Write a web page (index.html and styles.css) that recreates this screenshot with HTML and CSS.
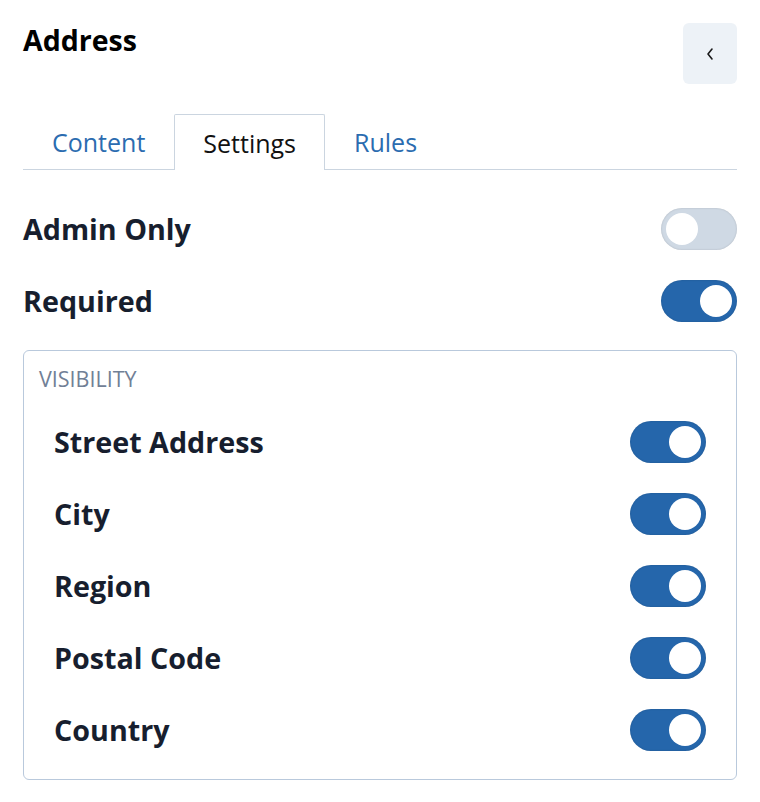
FILE: index.html
```html
<!DOCTYPE html>
<html>
<head>
<meta charset="utf-8">
<link rel="stylesheet" href="styles.css">
</head>
<body>
<div class="panel">
  <div class="header">
    <h1 class="title">Address</h1>
    <button class="back-btn" aria-label="Back">
      <svg width="10" height="14" viewBox="0 0 10 14"><path d="M7 2 L3 7 L7 12" fill="none" stroke="#1a1a1a" stroke-width="1.6" stroke-linecap="round" stroke-linejoin="round"/></svg>
    </button>
  </div>
  <div class="tabs">
    <div class="tab">Content</div>
    <div class="tab active">Settings</div>
    <div class="tab">Rules</div>
  </div>
  <div class="settings">
    <div class="row">
      <span class="label">Admin Only</span>
      <span class="toggle off"><span class="knob"></span></span>
    </div>
    <div class="row">
      <span class="label">Required</span>
      <span class="toggle on"><span class="knob"></span></span>
    </div>
  </div>
  <div class="visibility">
    <div class="legend">VISIBILITY</div>
    <div class="vis-list">
      <div class="row"><span class="label">Street Address</span><span class="toggle on"><span class="knob"></span></span></div>
      <div class="row"><span class="label">City</span><span class="toggle on"><span class="knob"></span></span></div>
      <div class="row"><span class="label">Region</span><span class="toggle on"><span class="knob"></span></span></div>
      <div class="row"><span class="label">Postal Code</span><span class="toggle on"><span class="knob"></span></span></div>
      <div class="row"><span class="label">Country</span><span class="toggle on"><span class="knob"></span></span></div>
    </div>
  </div>
</div>
</body>
</html>
```
FILE: styles.css
```css
* { box-sizing: border-box; }
body {
  margin: 0;
  background: #ffffff;
  font-family: "Open Sans", "Noto Sans", sans-serif;
  color: #1a202c;
}
.panel {
  padding: 23px 23px;
}
.header {
  display: flex;
  justify-content: space-between;
  align-items: flex-start;
}
.title {
  margin: 0;
  font-size: 28.5px;
  line-height: 34px;
  font-weight: 700;
  color: #000;
}
.back-btn {
  width: 54px;
  height: 61px;
  border: none;
  border-radius: 6px;
  background: #edf2f7;
  display: flex;
  align-items: center;
  justify-content: center;
  padding: 0;
}
.tabs {
  display: flex;
  margin-top: 30px;
  border-bottom: 1px solid #cbd5e0;
}
.tab {
  height: 55px;
  padding: 0 28px;
  border: 1px solid transparent;
  border-bottom: none;
  margin-bottom: -1px;
  display: flex;
  align-items: center;
  font-size: 25px;
  color: #2b6cb0;
  background: #fff;
}
.tab.active {
  color: #111;
  border-color: #cbd5e0;
  border-radius: 2px 2px 0 0;
  height: 56px;
}
.settings {
  margin-top: 38px;
  display: flex;
  flex-direction: column;
  gap: 30px;
}
.row {
  display: flex;
  justify-content: space-between;
  align-items: center;
  height: 42px;
}
.label {
  font-size: 28.7px;
  line-height: 40px;
  font-weight: 700;
  color: #171e2e;
}
.toggle {
  width: 76px;
  height: 42px;
  border-radius: 21px;
  padding: 5px;
  display: flex;
  box-shadow: inset 0 0 2px rgba(0,0,0,0.18);
}
.toggle.on {
  background: #2566ab;
  justify-content: flex-end;
}
.toggle.off {
  background: #cfd9e4;
  justify-content: flex-start;
}
.knob {
  width: 32px;
  height: 32px;
  border-radius: 50%;
  background: #fff;
}
.visibility {
  margin-top: 28px;
  border: 1px solid #b9c9dc;
  border-radius: 6px;
  padding: 15px 15px 28px;
}
.legend {
  font-size: 21.5px;
  line-height: 26px;
  color: #718096;
}
.vis-list {
  padding: 29px 15px 0;
  display: flex;
  flex-direction: column;
  gap: 30px;
}
```
